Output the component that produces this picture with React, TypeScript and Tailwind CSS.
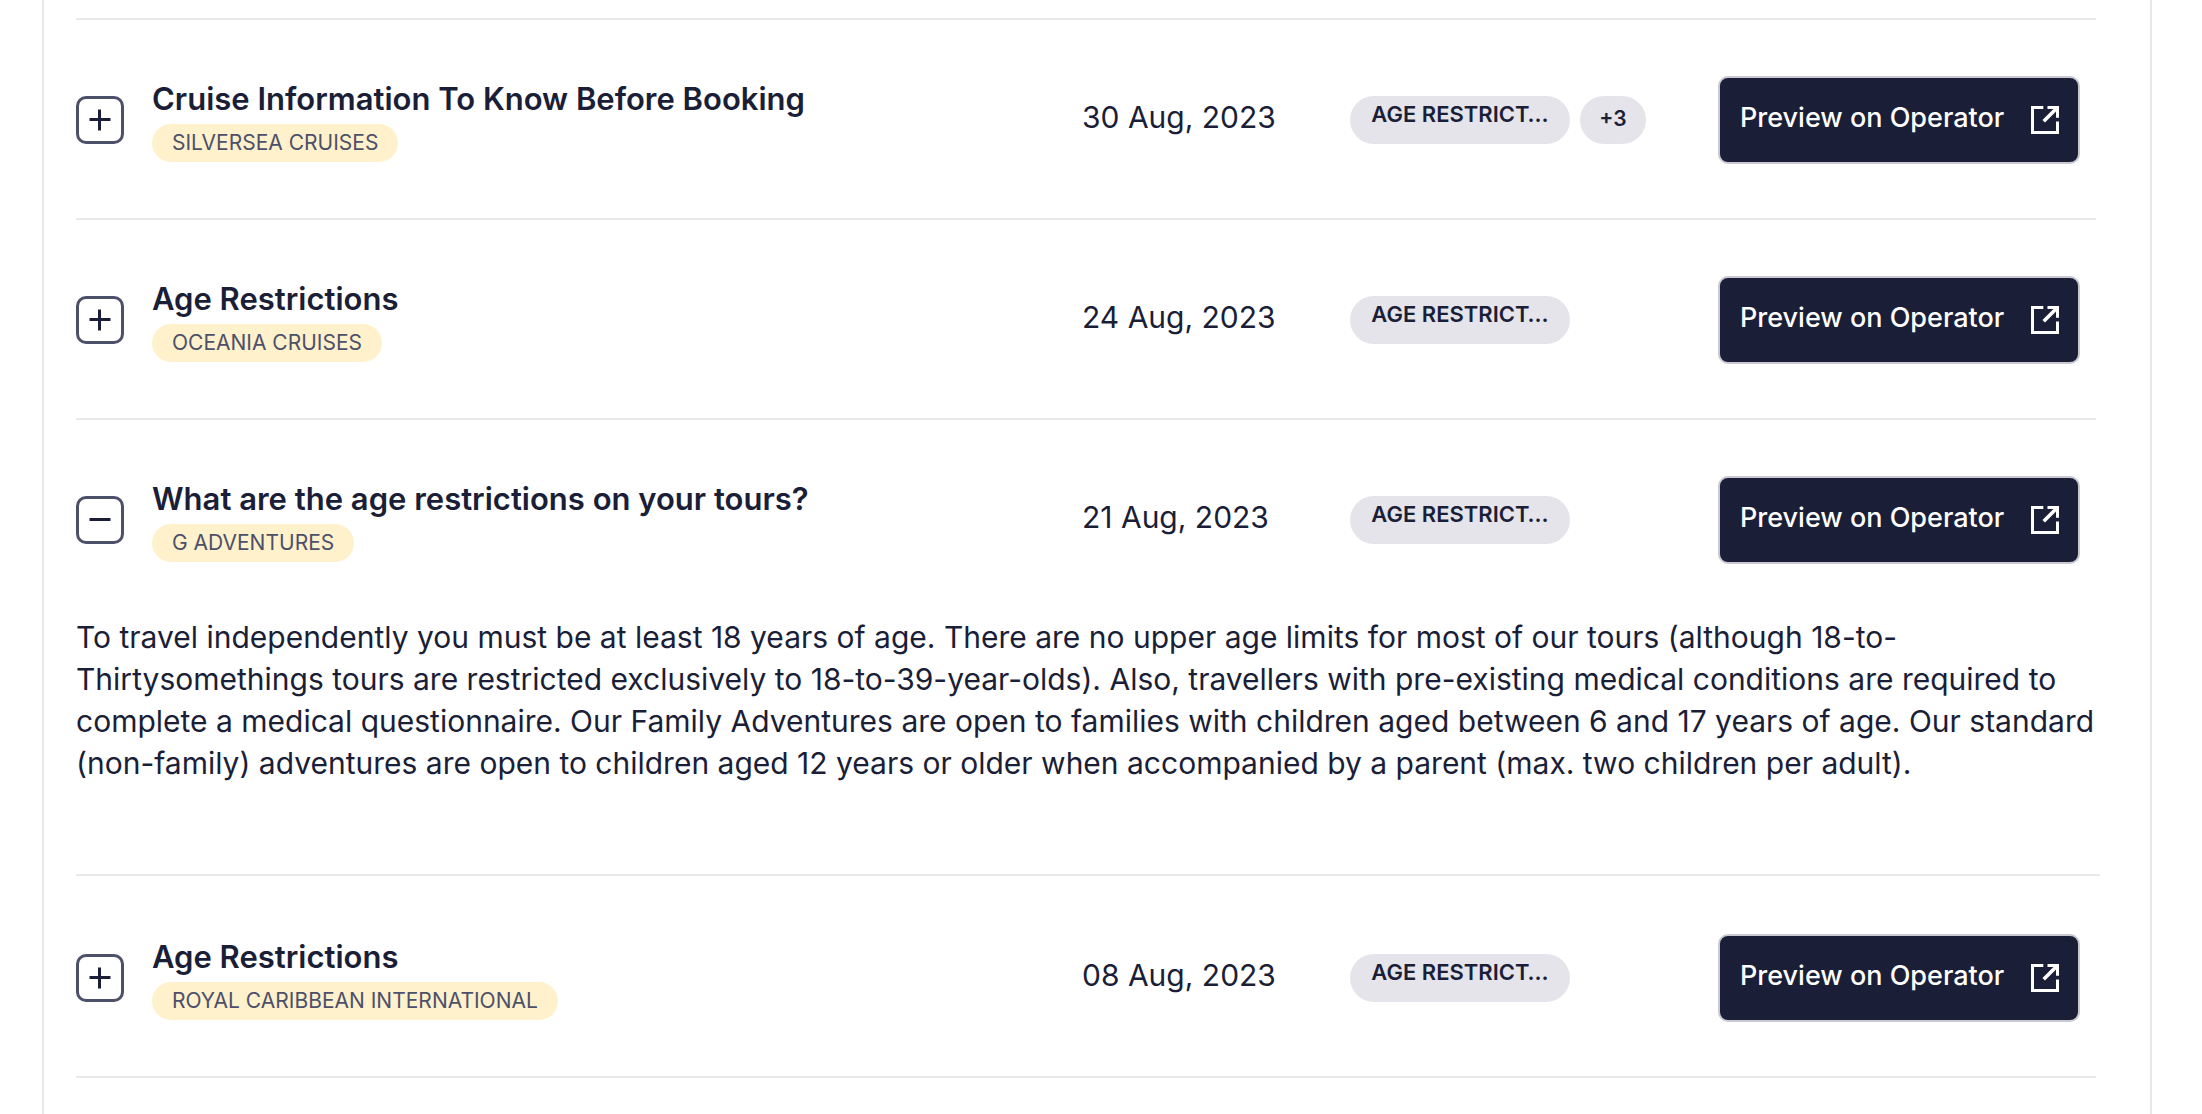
import { useState } from "react";

type Article = {
  title: string;
  supplier: string;
  date: string;
  tag: string;
  more?: number;
  body: string;
};

const articles: Article[] = [
  {
    title: "Cruise Information To Know Before Booking",
    supplier: "SILVERSEA CRUISES",
    date: "30 Aug, 2023",
    tag: "AGE RESTRICT…",
    more: 3,
    body: "",
  },
  {
    title: "Age Restrictions",
    supplier: "OCEANIA CRUISES",
    date: "24 Aug, 2023",
    tag: "AGE RESTRICT…",
    body: "",
  },
  {
    title: "What are the age restrictions on your tours?",
    supplier: "G ADVENTURES",
    date: "21 Aug, 2023",
    tag: "AGE RESTRICT…",
    body: "To travel independently you must be at least 18 years of age. There are no upper age limits for most of our tours (although 18-to-Thirtysomethings tours are restricted exclusively to 18-to-39-year-olds). Also, travellers with pre-existing medical conditions are required to complete a medical questionnaire. Our Family Adventures are open to families with children aged between 6 and 17 years of age. Our standard (non-family) adventures are open to children aged 12 years or older when accompanied by a parent (max. two children per adult).",
  },
  {
    title: "Age Restrictions",
    supplier: "ROYAL CARIBBEAN INTERNATIONAL",
    date: "08 Aug, 2023",
    tag: "AGE RESTRICT…",
    body: "",
  },
];

function ToggleIcon({ open }: { open: boolean }) {
  return (
    <svg viewBox="0 0 22 22" className="size-[22px]" fill="none" stroke="#1b1e37" strokeWidth="3" aria-hidden="true">
      <path d="M0.5 10.5h21" />
      {!open && <path d="M10.5 0.5v21" />}
    </svg>
  );
}

function ExternalIcon() {
  return (
    <svg viewBox="0 0 28 28" className="size-7 shrink-0" fill="none" stroke="currentColor" strokeWidth="3" aria-hidden="true">
      <path d="M12.3 1.5H1.5v25h25V15.5" />
      <path d="M16.5 1.5h10v10.3" />
      <path d="M26 2L12.7 15.3" strokeWidth="3.6" />
    </svg>
  );
}

function ArticleRow({ article, open, onToggle }: { article: Article; open: boolean; onToggle: () => void }) {
  return (
    <li className={open ? "mb-0.5 border-b-2 border-[#e8e8e8] pb-[90px]" : "mr-1 border-b-2 border-[#e8e8e8] pb-0.5"}>
      <div className={open ? "mr-1 flex items-center pt-14 pr-4 pb-[52px]" : "flex items-center pt-14 pr-4 pb-[52px]"}>
        <div className="flex flex-1 items-center gap-7">
          <button
            type="button"
            onClick={onToggle}
            aria-expanded={open}
            aria-label={article.title}
            className="flex size-12 shrink-0 items-center justify-center rounded-[10px] border-3 border-[#4d5069]"
          >
            <ToggleIcon open={open} />
          </button>
          <div className="flex flex-col items-start gap-1">
            <h2 className="text-[31px] leading-[42px] font-semibold">{article.title}</h2>
            <span className="rounded-full bg-[#fff1cc] px-5 text-[21px] leading-[38px] text-[#4d5069]">
              {article.supplier}
            </span>
          </div>
        </div>
        <time className="w-[268px] shrink-0 pb-1.5 text-[30px] leading-[42px]">{article.date}</time>
        <div className="flex w-[368px] shrink-0 gap-2.5">
          <span className="h-12 w-[220px] rounded-full bg-[#e5e4ea] text-center text-[22px] leading-9 font-semibold">
            {article.tag}
          </span>
          {article.more && (
            <span className="h-12 w-[66px] rounded-full bg-[#e5e4ea] text-center text-[21px] leading-[46px] font-semibold">
              +{article.more}
            </span>
          )}
        </div>
        <button
          type="button"
          className="flex h-[88px] w-[362px] shrink-0 items-center justify-between rounded-[10px] border-2 border-[#c8c9d1] bg-[#1b1e37] pr-[19px] pl-5 text-[27px] font-medium text-white"
        >
          <span className="pb-1">Preview on Operator</span>
          <ExternalIcon />
        </button>
      </div>
      {open && article.body && <p className="text-[30px] leading-[42px]">{article.body}</p>}
    </li>
  );
}

export default function App() {
  const [openIndex, setOpenIndex] = useState<number | null>(2);

  return (
    <div className="min-h-screen bg-white font-['Inter',sans-serif] text-[#1b1e37]">
      <main className="mr-[50px] ml-[42px] min-h-screen border-x-2 border-[#e8e8e8] pt-[18px] pr-[50px] pl-8">
        <div className="mr-1 h-0.5 bg-[#e8e8e8]" />
        <ul>
          {articles.map((article, i) => (
            <ArticleRow
              key={i}
              article={article}
              open={openIndex === i}
              onToggle={() => setOpenIndex(openIndex === i ? null : i)}
            />
          ))}
        </ul>
      </main>
    </div>
  );
}
